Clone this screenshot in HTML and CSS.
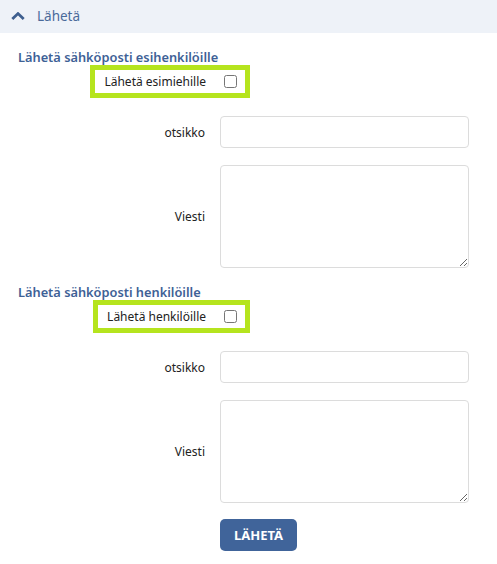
FILE: index.html
```html
<!DOCTYPE html>
<html>
  <head>
    <meta charset="UTF-8">
    <title>Lähetä</title>
    <link rel="stylesheet" href="styles.css">
  </head>
  <body>
    <div class="panel-header">
      <svg class="chevron" width="14" height="8" viewBox="0 0 14 8">
        <path d="M1.3 7 L7 1.6 L12.7 7" fill="none" stroke="#3e5f8f" stroke-width="2.8"/>
      </svg>
      <span>Lähetä</span>
    </div>
    <form class="panel-body">
      <h3>Lähetä sähköposti esihenkilöille</h3>
      <div class="check-row">
        <label class="highlight">
          <span>Lähetä esimiehille</span>
          <input type="checkbox" name="supervisors">
        </label>
      </div>
      <div class="form-group">
        <label>otsikko</label>
        <input type="text" name="subject1">
      </div>
      <div class="form-group">
        <label>Viesti</label>
        <textarea name="message1"></textarea>
      </div>

      <h3>Lähetä sähköposti henkilöille</h3>
      <div class="check-row">
        <label class="highlight">
          <span>Lähetä henkilöille</span>
          <input type="checkbox" name="persons">
        </label>
      </div>
      <div class="form-group">
        <label>otsikko</label>
        <input type="text" name="subject2">
      </div>
      <div class="form-group">
        <label>Viesti</label>
        <textarea name="message2"></textarea>
      </div>
      <div class="submit-group">
        <button type="button" class="primary">LÄHETÄ</button>
      </div>
    </form>
  </body>
</html>
```

FILE: styles.css
```css
* {
  box-sizing: border-box;
}
body {
  margin: 0;
  font-family: "Noto Sans", "Open Sans", sans-serif;
  font-size: 12px;
  color: rgb(34, 34, 34);
  background: white;
}
.panel-header {
  height: 33px;
  background-color: rgb(238, 242, 248);
  display: flex;
  align-items: center;
  padding-left: 11px;
  color: rgb(74, 106, 154);
  font-size: 13.5px;
}
.chevron {
  margin-right: 12px;
  margin-top: -2px;
}
.panel-header span {
  margin-top: -1px;
}
.panel-body {
  padding: 0 18px;
}
h3 {
  margin: 16px 0 0 0;
  font-size: 12.8px;
  line-height: 16px;
  font-weight: 600;
  color: rgb(62, 97, 150);
}
.check-row {
  width: 232px;
  display: flex;
  justify-content: flex-end;
  margin-bottom: 18px;
}
.highlight {
  display: flex;
  align-items: center;
  height: 33px;
  border: 5px solid rgb(181, 228, 30);
  padding: 0 8px 0 9px;
}
.highlight input {
  margin: 0 0 0 18px;
  width: 13px;
  height: 13px;
}
.form-group {
  display: flex;
  align-items: center;
  margin-top: 17px;
}
.form-group label {
  width: 187px;
  text-align: right;
}
.form-group input,
.form-group textarea {
  margin-left: 15px;
  width: 249px;
  border: 1px solid rgb(220, 220, 220);
  border-radius: 4px;
  font-family: inherit;
  font-size: 13px;
}
.form-group input {
  height: 32px;
}
.form-group textarea {
  height: 103px;
}
.submit-group {
  padding-left: 202px;
  margin-top: 16px;
}
button.primary {
  width: 77px;
  height: 32px;
  border: none;
  border-radius: 5px;
  background-color: rgb(64, 100, 154);
  color: white;
  font-family: inherit;
  font-size: 13px;
  font-weight: bold;
  cursor: pointer;
}
```
